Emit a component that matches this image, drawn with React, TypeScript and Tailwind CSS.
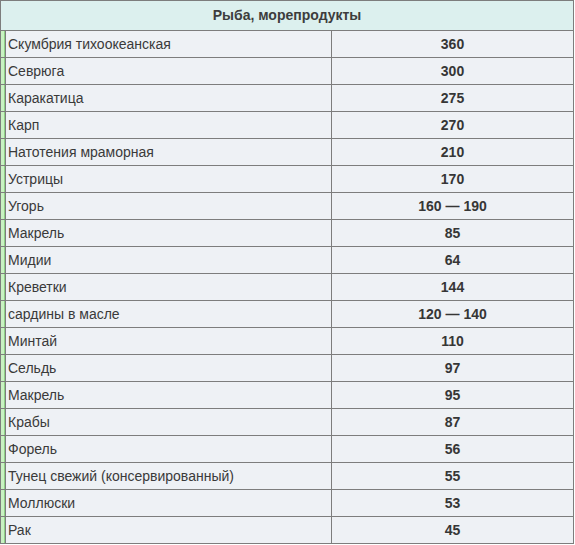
const rows: [string, string][] = [
  ["Скумбрия тихоокеанская", "360"],
  ["Севрюга", "300"],
  ["Каракатица", "275"],
  ["Карп", "270"],
  ["Натотения мраморная", "210"],
  ["Устрицы", "170"],
  ["Угорь", "160 — 190"],
  ["Макрель", "85"],
  ["Мидии", "64"],
  ["Креветки", "144"],
  ["сардины в масле", "120 — 140"],
  ["Минтай", "110"],
  ["Сельдь", "97"],
  ["Макрель", "95"],
  ["Крабы", "87"],
  ["Форель", "56"],
  ["Тунец свежий (консервированный)", "55"],
  ["Моллюски", "53"],
  ["Рак", "45"],
];

export default function App() {
  return (
    <div className="w-[575px] h-[545px] bg-white overflow-hidden font-['Liberation_Sans',Arial,sans-serif] text-[14px]">
      <div className="w-[574px] border-t border-l border-r border-[#7d7d7d]">
        <div className="h-[30px] border-b border-[#7d7d7d] bg-[#dcf0ee] flex items-center justify-center font-bold text-[#3d3d3d]">
          Рыба, морепродукты
        </div>
        {rows.map(([name, value], i) => (
          <div key={i} className="flex h-[27px] border-b border-[#7d7d7d]">
            <div className="w-[3px] bg-[#c9f2c2]" />
            <div className="w-[1px] bg-[#8fd087]" />
            <div className="w-[327px] border-l border-r border-[#7d7d7d] bg-[#eef1f5] flex items-center pl-[2px] text-[#3a3a3a]">
              {name}
            </div>
            <div className="flex-1 bg-[#eef1f5] flex items-center justify-center font-bold text-[#363636]">
              {value}
            </div>
          </div>
        ))}
      </div>
    </div>
  );
}
